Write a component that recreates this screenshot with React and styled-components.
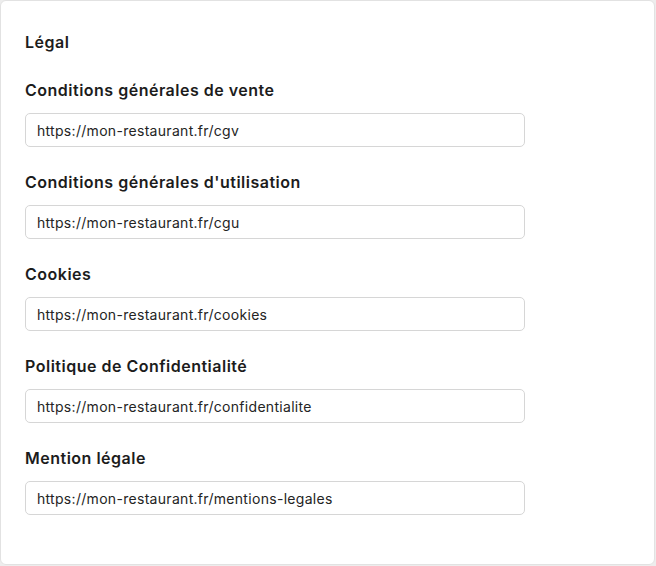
import React from 'react';
import styled, { createGlobalStyle } from 'styled-components';

const GlobalStyle = createGlobalStyle`
  html, body {
    margin: 0;
    padding: 0;
    background: #ededed;
    font-family: Inter, "Noto Sans", sans-serif;
  }
`;

const Card = styled.section`
  box-sizing: border-box;
  width: 655px;
  height: 565px;
  background: #ffffff;
  border: 1px solid #e2e2e2;
  border-radius: 6px;
  padding: 31px 24px 0 24px;
`;

const Title = styled.h2`
  margin: 0 0 28px 0;
  font-size: 16px;
  line-height: 20px;
  font-weight: 600;
  letter-spacing: 0.5px;
  color: #1c1c1c;
`;

const Fields = styled.div`
  display: flex;
  flex-direction: column;
  gap: 25px;
`;

const Field = styled.label`
  display: flex;
  flex-direction: column;
  gap: 13px;
`;

const Label = styled.span`
  font-size: 16px;
  line-height: 20px;
  font-weight: 600;
  letter-spacing: 0.5px;
  color: #1c1c1c;
`;

const Input = styled.input`
  box-sizing: border-box;
  width: 500px;
  height: 34px;
  padding: 0 11px;
  border: 1px solid #d6d6d6;
  border-radius: 5px;
  font-family: inherit;
  font-size: 14px;
  letter-spacing: 0.3px;
  color: #242424;
  background: #fff;
  outline: none;
`;

const links = [
  { label: 'Conditions générales de vente', url: 'https://mon-restaurant.fr/cgv' },
  { label: "Conditions générales d'utilisation", url: 'https://mon-restaurant.fr/cgu' },
  { label: 'Cookies', url: 'https://mon-restaurant.fr/cookies' },
  { label: 'Politique de Confidentialité', url: 'https://mon-restaurant.fr/confidentialite' },
  { label: 'Mention légale', url: 'https://mon-restaurant.fr/mentions-legales' },
];

const App = () => (
  <>
    <GlobalStyle />
    <Card>
      <Title>Légal</Title>
      <Fields>
        {links.map((link) => (
          <Field key={link.label}>
            <Label>{link.label}</Label>
            <Input type="text" defaultValue={link.url} />
          </Field>
        ))}
      </Fields>
    </Card>
  </>
);

export default App;
